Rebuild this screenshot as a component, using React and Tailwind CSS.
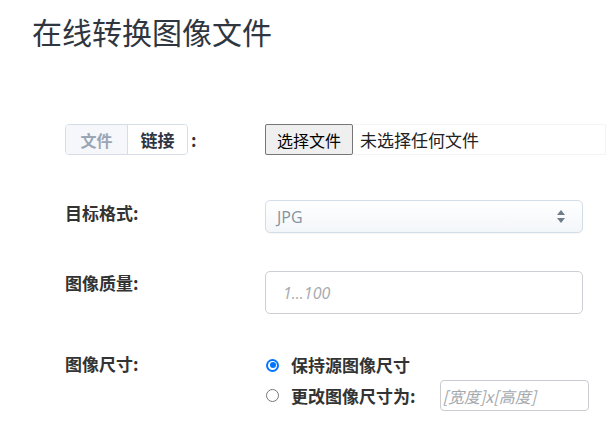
import { useState } from "react";

const cjk = { fontFamily: '"Noto Sans CJK SC", "Noto Sans", sans-serif' };
const latin = { fontFamily: '"Open Sans", "Noto Sans CJK SC", sans-serif' };

function Radio({ checked }) {
  return checked ? (
    <span className="w-[13px] h-[13px] rounded-full bg-[#0075ff] flex items-center justify-center shrink-0">
      <span className="w-[9px] h-[9px] rounded-full bg-white flex items-center justify-center">
        <span className="w-[6px] h-[6px] rounded-full bg-[#0075ff]" />
      </span>
    </span>
  ) : (
    <span className="block w-[13px] h-[13px] rounded-full border border-[#767676] bg-white shrink-0" />
  );
}

function App() {
  const [mode, setMode] = useState("file");
  const [keep, setKeep] = useState(true);

  return (
    <div className="w-[610px] h-[428px] bg-white text-[#333] overflow-hidden" style={cjk}>
      <h1 className="pl-[32px] pt-[11px] text-[30px] leading-[40px] font-normal text-[#2f3640]">在线转换图像文件</h1>

      <div className="ml-[65px] mt-[73px] flex flex-col">
        {/* source */}
        <div className="flex items-center h-[31px]">
          <div className="w-[200px] flex items-center">
            <div className="flex h-[31px] border border-[#d4dde8] rounded-[4px] overflow-hidden text-[16px] font-bold">
              <button
                onClick={() => setMode("file")}
                className="w-[62px] bg-[#f5f7fa] text-[#9aa6b6] border-r border-[#d4dde8]"
              >
                文件
              </button>
              <button onClick={() => setMode("url")} className="w-[59px] bg-white text-[#2d3440] text-[17px]">
                链接
              </button>
            </div>
            <span className="ml-[3px] text-[17px] font-bold text-[#333]">:</span>
          </div>
          <div className="flex items-center h-[31px] w-[341px] border border-[#f4f4f4] border-l-0">
            <button className="h-[31px] w-[88px] border border-[#767676] bg-[#efefef] rounded-[2px] text-[16px] text-black">
              选择文件
            </button>
            <span className="ml-[7px] text-[17px] text-[#222]">{mode === "file" ? "未选择任何文件" : "未选择任何文件"}</span>
          </div>
        </div>

        {/* target format */}
        <div className="flex mt-[45px]">
          <div className="w-[200px] pt-[2px] text-[17px] leading-[22px] font-bold text-[#333]">目标格式:</div>
          <div className="w-[318px] h-[33px] rounded-[5px] border border-[#d3dde7] bg-gradient-to-b from-white to-[#f3f6f9] flex items-center justify-between pl-[11px] pr-[17px] shadow-[0_1px_1px_rgba(0,0,0,0.04)]">
            <span className="text-[16px] text-[#8592a0]" style={latin}>JPG</span>
            <svg width="8" height="13" viewBox="0 0 8 13">
              <path d="M4 0 L8 5 L0 5 Z" fill="#6f7c8a" />
              <path d="M0 8 L8 8 L4 13 Z" fill="#6f7c8a" />
            </svg>
          </div>
        </div>

        {/* quality */}
        <div className="flex mt-[38px]">
          <div className="w-[200px] pt-[1px] text-[17px] leading-[22px] font-bold text-[#333]">图像质量:</div>
          <div className="w-[318px] h-[43px] rounded-[5px] border border-[#ccd0d4] bg-white flex items-center pl-[17px]">
            <span className="text-[16px] italic text-[#a5a9ad]" style={latin}>1...100</span>
          </div>
        </div>

        {/* size */}
        <div className="flex mt-[39px]">
          <div className="w-[200px] text-[17px] leading-[22px] font-bold text-[#333]">图像尺寸:</div>
          <div className="flex flex-col">
            <div className="flex items-center h-[24px] cursor-pointer" onClick={() => setKeep(true)}>
              <span className="ml-[1px]"><Radio checked={keep} /></span>
              <span className="ml-[12px] text-[17px] font-bold text-[#333]">保持源图像尺寸</span>
            </div>
            <div className="flex items-center mt-[3px] cursor-pointer" onClick={() => setKeep(false)}>
              <span className="ml-[1px]"><Radio checked={!keep} /></span>
              <span className="ml-[12px] text-[17px] font-bold text-[#333]">更改图像尺寸为:</span>
              <div className="ml-[24px] w-[149px] h-[31px] rounded-[4px] border border-[#c9cdd1] flex items-center pl-[2px]">
                <span className="text-[16px] italic text-[#a5a9ad]">[宽度]x[高度]</span>
              </div>
            </div>
          </div>
        </div>
      </div>
    </div>
  );
}

export default App;
